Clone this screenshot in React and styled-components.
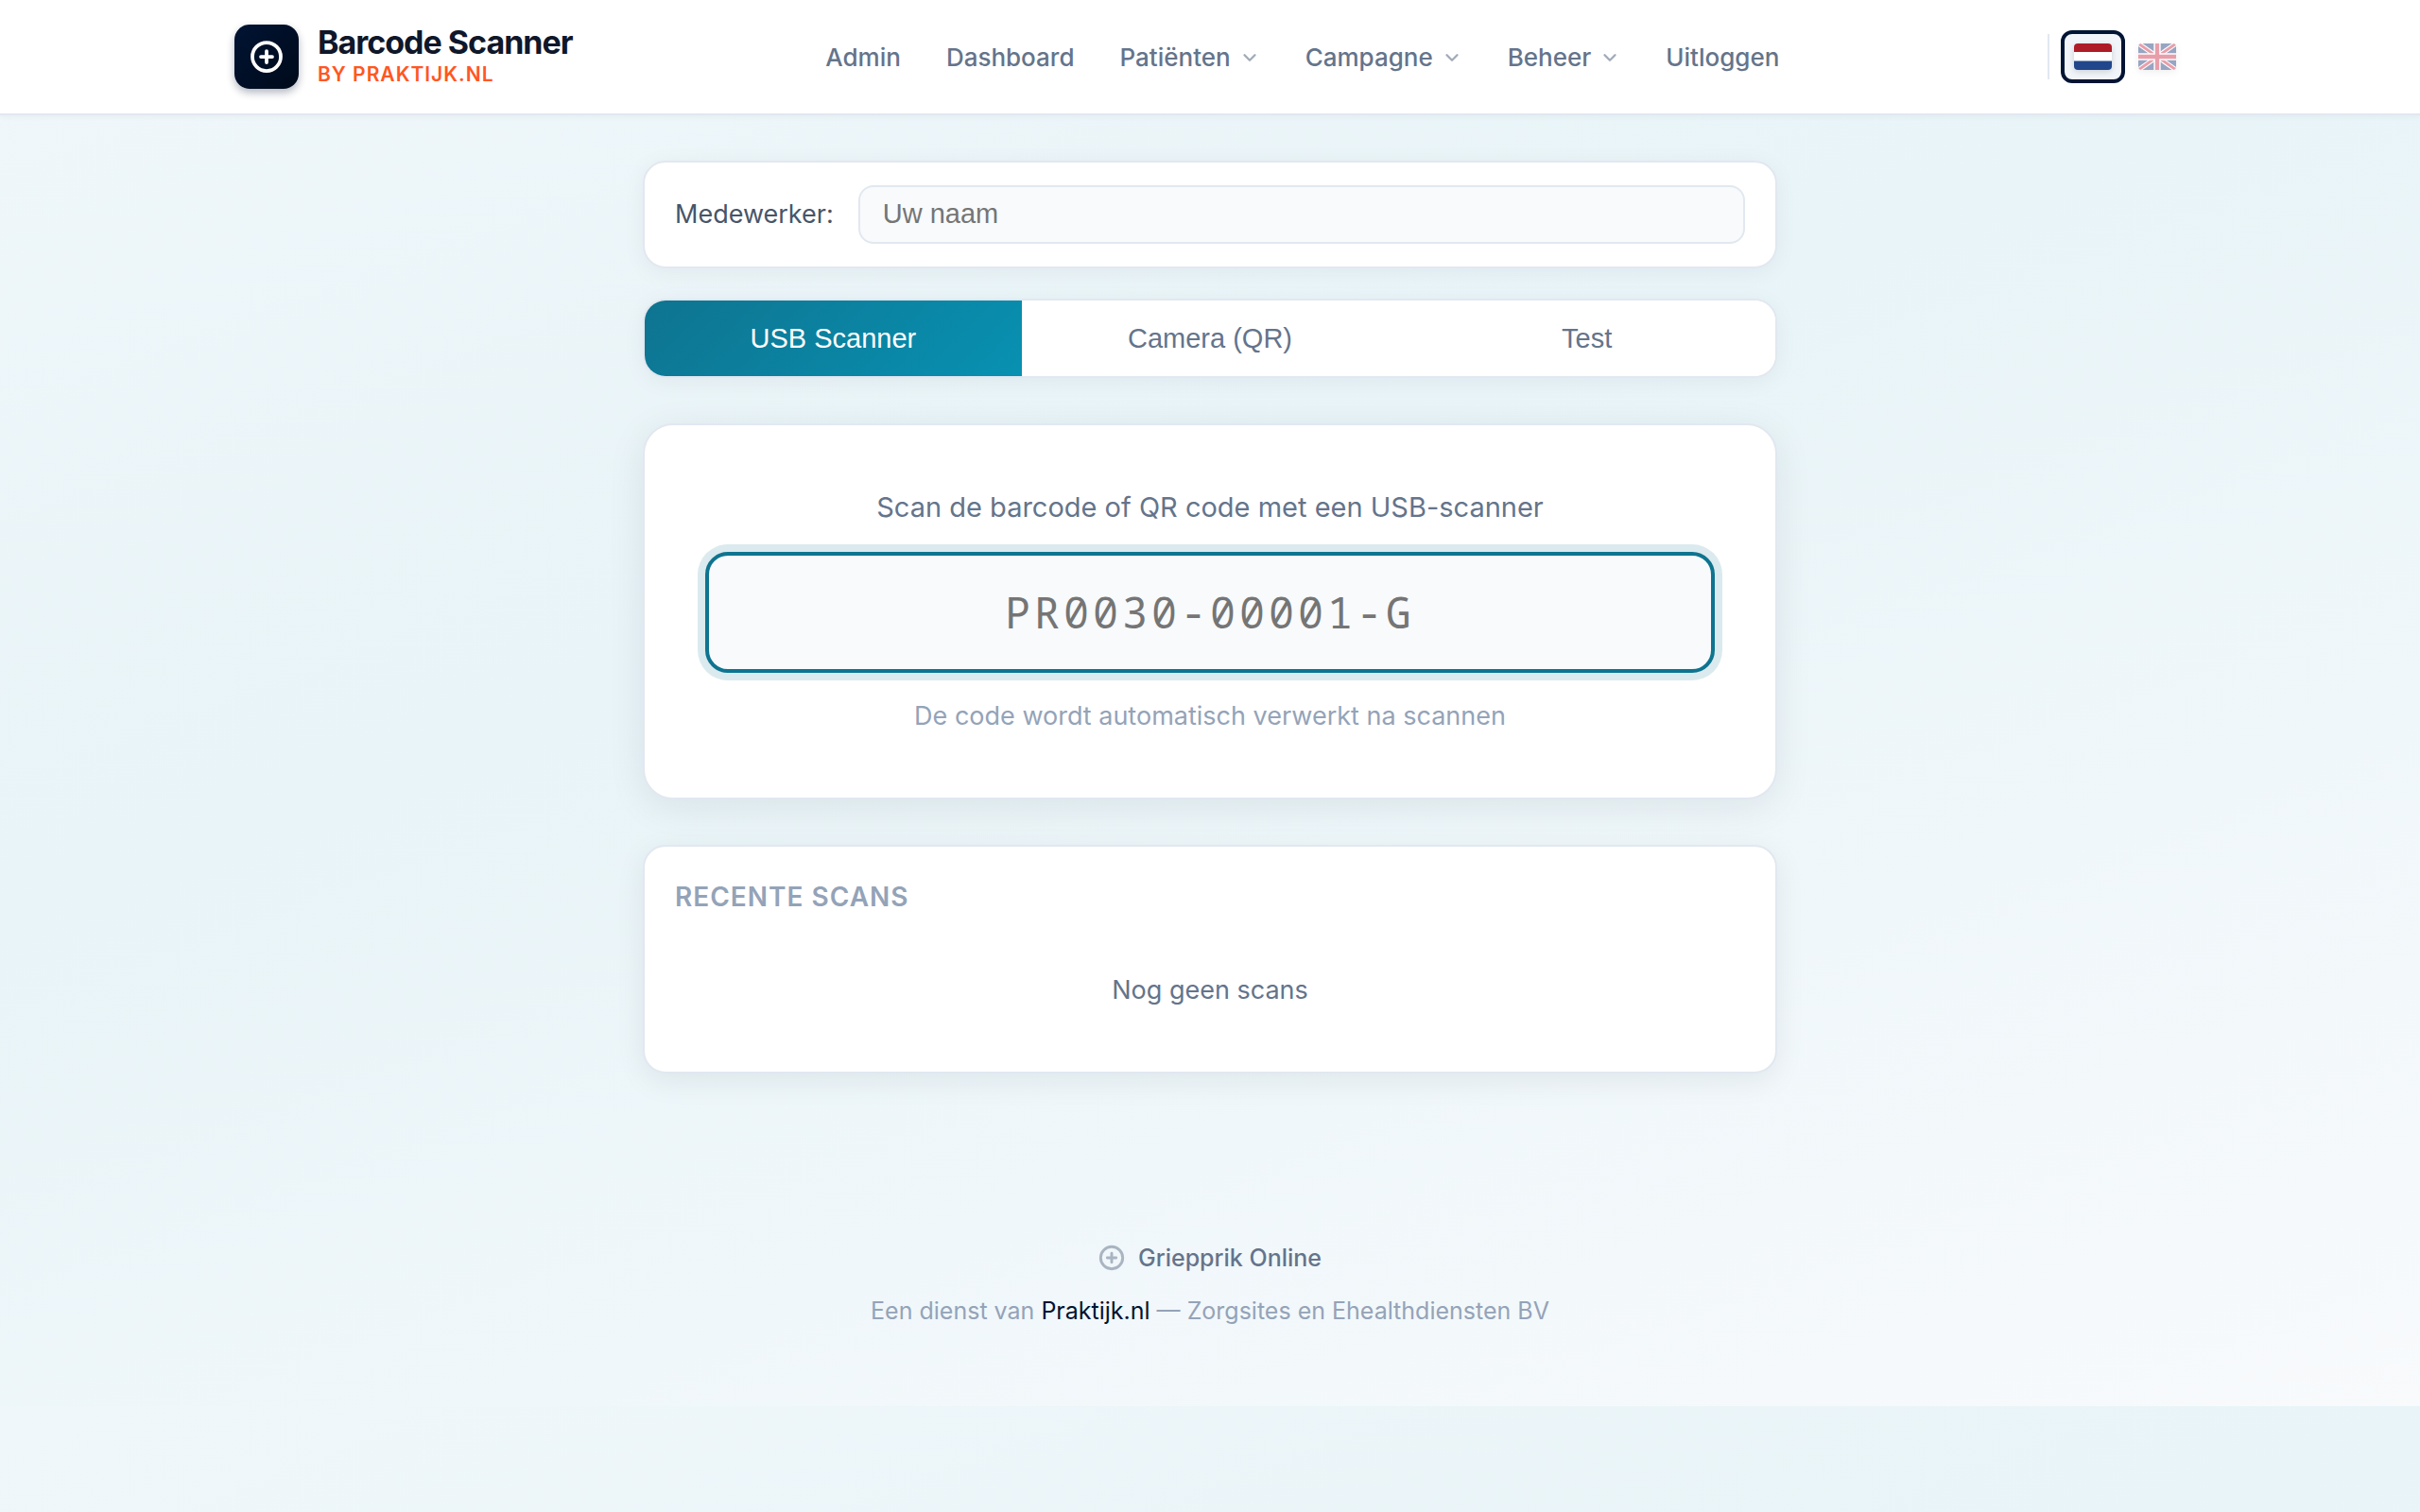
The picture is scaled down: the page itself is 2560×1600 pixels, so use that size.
import { useState } from "react";
import styled, { createGlobalStyle } from "styled-components";

const menu = [
  { name: "Admin" },
  { name: "Dashboard" },
  { name: "Patiënten", sub: true },
  { name: "Campagne", sub: true },
  { name: "Beheer", sub: true },
  { name: "Uitloggen" },
];

const tabs = ["USB Scanner", "Camera (QR)", "Test"];

function PlusIcon({ size }) {
  return (
    <svg width={size} height={size} viewBox="0 0 24 24" fill="none" stroke="currentColor" strokeWidth="2.5" strokeLinecap="round" aria-hidden="true">
      <circle cx="12" cy="12" r="10" />
      <path d="M12 8v8M8 12h8" />
    </svg>
  );
}

function Chevron() {
  return (
    <svg width="22" height="22" viewBox="0 0 24 24" fill="none" stroke="currentColor" strokeWidth="2.5" strokeLinecap="round" strokeLinejoin="round" aria-hidden="true">
      <path d="M6 9l6 6 6-6" />
    </svg>
  );
}

function FlagNL() {
  return (
    <Flag viewBox="0 0 40 28" aria-hidden="true">
      <rect width="40" height="28" fill="#fff" />
      <rect width="40" height="9" fill="#ae1c28" />
      <rect y="18.5" width="40" height="9.5" fill="#21468b" />
    </Flag>
  );
}

function FlagUK() {
  return (
    <Flag viewBox="0 0 60 42" aria-hidden="true">
      <rect width="60" height="42" fill="#012169" />
      <path d="M0 0l60 42M60 0L0 42" stroke="#fff" strokeWidth="7.6" />
      <path d="M0 0l60 42M60 0L0 42" stroke="#c8102e" strokeWidth="4.4" />
      <path d="M30 0v42M0 21h60" stroke="#fff" strokeWidth="11" />
      <path d="M30 0v42M0 21h60" stroke="#c8102e" strokeWidth="6.6" />
    </Flag>
  );
}

export default function App() {
  const [tab, setTab] = useState("USB Scanner");
  const [lang, setLang] = useState("nl");

  return (
    <>
      <GlobalStyle />
      <Header>
        <HeaderInner>
          <Brand href="#">
            <Logo>
              <PlusIcon size={36} />
            </Logo>
            <BrandText>
              <strong>Barcode Scanner</strong>
              <span>BY PRAKTIJK.NL</span>
            </BrandText>
          </Brand>
          <Nav>
            {menu.map((item) =>
              item.sub ? (
                <NavButton key={item.name} type="button">
                  {item.name}
                  <Chevron />
                </NavButton>
              ) : (
                <NavLink key={item.name} href="#">
                  {item.name}
                </NavLink>
              )
            )}
          </Nav>
          <Languages>
            <LangButton type="button" aria-label="Nederlands" $active={lang === "nl"} onClick={() => setLang("nl")}>
              <FlagNL />
            </LangButton>
            <LangButton type="button" aria-label="English" $active={lang === "en"} onClick={() => setLang("en")}>
              <FlagUK />
            </LangButton>
          </Languages>
        </HeaderInner>
      </Header>

      <Main>
        <EmployeeCard>
          <label htmlFor="employee">Medewerker:</label>
          <EmployeeInput id="employee" type="text" placeholder="Uw naam" />
        </EmployeeCard>

        <Tabs>
          {tabs.map((name) => (
            <Tab key={name} type="button" $active={tab === name} onClick={() => setTab(name)}>
              {name}
            </Tab>
          ))}
        </Tabs>

        <ScanCard>
          <label htmlFor="code">Scan de barcode of QR code met een USB-scanner</label>
          <CodeInput id="code" type="text" placeholder="PR0030-00001-G" autoComplete="off" />
          <Hint>De code wordt automatisch verwerkt na scannen</Hint>
        </ScanCard>

        <RecentCard>
          <h2>Recente scans</h2>
          <Empty>Nog geen scans</Empty>
        </RecentCard>
      </Main>

      <Footer>
        <FooterBrand>
          <PlusIcon size={28} />
          Griepprik Online
        </FooterBrand>
        <p>
          Een dienst van <a href="#">Praktijk.nl</a> — Zorgsites en Ehealthdiensten BV
        </p>
      </Footer>
    </>
  );
}

const GlobalStyle = createGlobalStyle`
* {
  box-sizing: border-box;
}
body {
  margin: 0;
  font-family: Inter, sans-serif;
  font-size: 27px;
  line-height: 44px;
  color: #64748b;
  background: linear-gradient(160deg, #f0f7fa 0%, #e8f4f8 40%, #f8fafc 100%);
}
h2, p {
  margin: 0;
}
a {
  text-decoration: none;
}
`;

const Header = styled.header`
  background: #fff;
  border-bottom: 2px solid #e2e8f0;
  box-shadow: 0 2px 6px rgba(15, 23, 42, 0.04);
`;

const HeaderInner = styled.div`
  max-width: 2160px;
  height: 120px;
  margin: 0 auto;
  padding: 0 44px 0 48px;
  display: flex;
  align-items: center;
  justify-content: space-between;
`;

const Brand = styled.a`
  display: flex;
  align-items: center;
  gap: 20px;
`;

const Logo = styled.span`
  width: 68px;
  height: 68px;
  border-radius: 16px;
  display: flex;
  align-items: center;
  justify-content: center;
  color: #fff;
  background: linear-gradient(135deg, #001433, #000a1a);
  box-shadow: 0 4px 8px rgba(0, 20, 51, 0.3);
`;

const BrandText = styled.span`
  display: flex;
  flex-direction: column;
  gap: 2px;

  strong {
    font-size: 34px;
    line-height: 36px;
    font-weight: 700;
    letter-spacing: -1px;
    color: #0f172a;
  }
  span {
    font-size: 21px;
    line-height: 28px;
    font-weight: 600;
    letter-spacing: 1px;
    color: #ff5722;
  }
`;

const Nav = styled.nav`
  display: flex;
  align-items: center;
  gap: 8px;
  margin-right: 16px;
`;

const NavLink = styled.a`
  display: flex;
  align-items: center;
  gap: 9px;
  padding: 14px 20px 12px;
  border: 0;
  background: none;
  font-family: inherit;
  font-size: 26px;
  line-height: 40px;
  font-weight: 500;
  color: #64748b;
  white-space: nowrap;

  svg {
    opacity: 0.6;
  }
`;

const NavButton = styled(NavLink).attrs({ as: "button" })`
  cursor: pointer;
`;

const Languages = styled.div`
  display: flex;
  align-items: center;
  border-left: 2px solid #e2e8f0;
  padding-left: 12px;
  height: 48px;
`;

const LangButton = styled.button`
  display: flex;
  padding: 10px;
  border: 4px solid ${(p) => (p.$active ? "#001433" : "transparent")};
  border-radius: 12px;
  background: ${(p) => (p.$active ? "#f1f5f9" : "none")};
  opacity: ${(p) => (p.$active ? 1 : 0.4)};
  cursor: pointer;
`;

const Flag = styled.svg`
  width: 40px;
  height: 28px;
  border-radius: 4px;
  box-shadow: 0 2px 6px rgba(0, 0, 0, 0.15);
`;

const Main = styled.main`
  max-width: 1200px;
  margin: 0 auto;
  padding: 48px 0 0;
`;

const Card = styled.section`
  background: #fff;
  border: 2px solid #e2e8f0;
  border-radius: 24px;
  box-shadow: 0 4px 24px rgba(15, 23, 42, 0.05);
`;

const EmployeeCard = styled(Card)`
  display: flex;
  align-items: center;
  gap: 26px;
  padding: 24px 32px;
  margin-bottom: 32px;

  label {
    color: #475569;
  }
`;

const EmployeeInput = styled.input`
  flex: 1;
  min-width: 0;
  height: 62px;
  padding: 0 24px 2px;
  border: 2px solid #e2e8f0;
  border-radius: 16px;
  background: #f8fafc;
  font-family: "Liberation Sans", Arial, sans-serif;
  font-size: 29px;
  outline: none;
`;

const Tabs = styled(Card)`
  display: flex;
  overflow: hidden;
  margin-bottom: 48px;
`;

const Tab = styled.button`
  flex: 1;
  height: 80px;
  border: 0;
  background: ${(p) => (p.$active ? "linear-gradient(135deg, #0e7490, #0891b2)" : "#fff")};
  color: ${(p) => (p.$active ? "#fff" : "#64748b")};
  font-family: "Liberation Sans", Arial, sans-serif;
  font-size: 29px;
  cursor: pointer;
`;

const ScanCard = styled(Card)`
  display: flex;
  flex-direction: column;
  align-items: center;
  padding: 64px;
  border-radius: 32px;
  box-shadow: 0 8px 40px rgba(15, 23, 42, 0.08);
  margin-bottom: 48px;

  label {
    font-size: 29px;
    line-height: 46px;
  }
`;

const CodeInput = styled.input`
  width: 100%;
  height: 128px;
  margin: 24px 0;
  padding: 0 0 2px;
  border: 4px solid #0e7490;
  border-radius: 24px;
  background: #f8fafc;
  box-shadow: 0 0 0 8px rgba(14, 116, 144, 0.15);
  font-family: "Noto Sans Mono", "DejaVu Sans Mono", monospace;
  font-size: 45px;
  letter-spacing: 4px;
  text-align: center;
  outline: none;
`;

const Hint = styled.p`
  color: #94a3b8;
`;

const RecentCard = styled(Card)`
  padding: 32px;
  box-shadow: 0 8px 32px rgba(15, 23, 42, 0.07);

  h2 {
    margin-bottom: 24px;
    font-size: 28px;
    font-weight: 600;
    line-height: 42px;
    letter-spacing: 1px;
    text-transform: uppercase;
    color: #94a3b8;
  }
`;

const Empty = styled.p`
  padding: 32px;
  text-align: center;
`;

const Footer = styled.footer`
  padding: 175px 48px 81px;
  text-align: center;
  font-size: 25px;
  line-height: 40px;
  color: #94a3b8;

  a {
    color: #001433;
  }
`;

const FooterBrand = styled.div`
  display: flex;
  align-items: center;
  justify-content: center;
  gap: 14px;
  margin-bottom: 16px;
  font-weight: 500;
  color: #64748b;

  svg {
    opacity: 0.5;
  }
`;
